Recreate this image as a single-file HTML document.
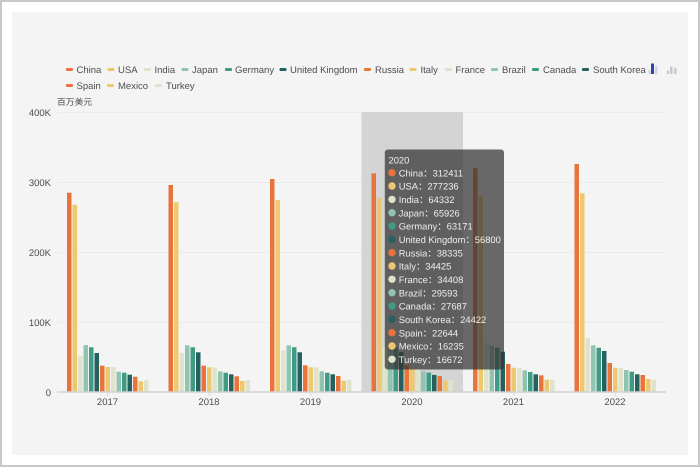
<!DOCTYPE html>
<html><head><meta charset="utf-8">
<style>
html,body{margin:0;padding:0;width:700px;height:467px;overflow:hidden;background:#fff}
svg{display:block;position:absolute;left:0;top:0;filter:blur(.3px)}
text{font-family:"Liberation Sans","Noto Sans CJK SC",sans-serif;font-size:9.5px;fill:#4d4d4d;text-rendering:geometricPrecision}
.a{fill:#e8743b}.b{fill:#edc86f}.c{fill:#dfe3cc}.d{fill:#8fc5b0}.e{fill:#419a84}.f{fill:#25615e}
.t text{fill:#eee;font-size:9.4px}
</style></head><body>
<svg width="700" height="467" viewBox="0 0 700 467" xmlns="http://www.w3.org/2000/svg">
<rect x="1" y="1" width="698" height="465" fill="#fff" stroke="#c8c8c8" stroke-width="2"/>
<rect x="12" y="12" width="676" height="443" fill="#f4f4f4"/>
<!-- legend -->
<g>
<rect class="a" x="66" y="68" width="7" height="3" rx="1"/><text x="76.5" y="73">China</text>
<rect class="b" x="107.5" y="68" width="7" height="3" rx="1"/><text x="118" y="73">USA</text>
<rect class="c" x="144" y="68" width="7" height="3" rx="1"/><text x="154.5" y="73">India</text>
<rect class="d" x="181.5" y="68" width="7" height="3" rx="1"/><text x="192" y="73">Japan</text>
<rect class="e" x="225" y="68" width="7" height="3" rx="1"/><text x="235" y="73">Germany</text>
<rect class="f" x="279.5" y="68" width="7" height="3" rx="1"/><text x="290" y="73">United Kingdom</text>
<rect class="a" x="364" y="68" width="7" height="3" rx="1"/><text x="375" y="73">Russia</text>
<rect class="b" x="409.5" y="68" width="7" height="3" rx="1"/><text x="420.5" y="73">Italy</text>
<rect class="c" x="445" y="68" width="7" height="3" rx="1"/><text x="455.5" y="73">France</text>
<rect class="d" x="491" y="68" width="7" height="3" rx="1"/><text x="502" y="73">Brazil</text>
<rect class="e" x="532" y="68" width="7" height="3" rx="1"/><text x="543" y="73">Canada</text>
<rect class="f" x="582" y="68" width="7" height="3" rx="1"/><text x="593" y="73">South Korea</text>
<rect class="a" x="66" y="84" width="7" height="3" rx="1"/><text x="76.5" y="89">Spain</text>
<rect class="b" x="107" y="84" width="7" height="3" rx="1"/><text x="118" y="89">Mexico</text>
<rect class="c" x="155" y="84" width="7" height="3" rx="1"/><text x="166" y="89">Turkey</text>
</g>
<!-- toolbox icons -->
<g fill="#cdd3ea"><rect x="648.5" y="70" width="2" height="4"/><rect x="655" y="66" width="2.5" height="8"/></g>
<rect x="651" y="63.5" width="3" height="10.5" fill="#2f48a8"/>
<g fill="#c9c9c9"><rect x="667" y="70.5" width="2" height="3.5"/><rect x="670" y="66.5" width="2.5" height="7.5"/><rect x="674" y="68" width="2.5" height="6"/></g>
<!-- axis title -->
<text x="57" y="105" style="font-size:8.8px">百万美元</text>
<!-- grid -->
<g stroke="#ebebeb" stroke-width="1">
<path d="M57 112.5H666M57 182.5H666M57 252.5H666M57 322.5H666"/>
</g>
<!-- y labels -->
<g text-anchor="end">
<text x="51" y="116">400K</text><text x="51" y="186">300K</text><text x="51" y="256">200K</text><text x="51" y="326">100K</text><text x="51" y="396">0</text>
</g>
<!-- axis pointer shadow -->
<rect x="361.5" y="112" width="101.5" height="280" fill="#d4d4d4"/>
<!-- bars -->
<g transform="translate(67 0)">
<path class="a" d="M0 192.7V392h4.5V192.7z"/><path class="b" d="M5.5 204.7V392h4.5V204.7z"/><path class="c" d="M11 356.3V392h4.5V356.3z"/><path class="d" d="M16.5 345V392h4.5V345z"/><path class="e" d="M22 347.3V392h4.5V347.3z"/><path class="f" d="M27.5 353V392h4.5V353z"/><path class="a" d="M33 365.7V392h4.5V365.7z"/><path class="b" d="M38.5 367V392h4.5V367z"/><path class="c" d="M44 367V392h4.5V367z"/><path class="d" d="M49.5 371.7V392h4.5V371.7z"/><path class="e" d="M55 372.7V392h4.5V372.7z"/><path class="f" d="M60.5 374.7V392h4.5V374.7z"/><path class="a" d="M66 376.7V392h4.5V376.7z"/><path class="b" d="M71.5 381.3V392h4.5V381.3z"/><path class="c" d="M77 380.3V392h4.5V380.3z"/>
</g>
<g transform="translate(168.5 0)">
<path class="a" d="M0 185V392h4.5V185z"/><path class="b" d="M5.5 202.3V392h4.5V202.3z"/><path class="c" d="M11 353V392h4.5V353z"/><path class="d" d="M16.5 345.3V392h4.5V345.3z"/><path class="e" d="M22 347.3V392h4.5V347.3z"/><path class="f" d="M27.5 352.3V392h4.5V352.3z"/><path class="a" d="M33 365.7V392h4.5V365.7z"/><path class="b" d="M38.5 367.3V392h4.5V367.3z"/><path class="c" d="M44 367.3V392h4.5V367.3z"/><path class="d" d="M49.5 371.3V392h4.5V371.3z"/><path class="e" d="M55 372.7V392h4.5V372.7z"/><path class="f" d="M60.5 374.3V392h4.5V374.3z"/><path class="a" d="M66 376.3V392h4.5V376.3z"/><path class="b" d="M71.5 381V392h4.5V381z"/><path class="c" d="M77 380V392h4.5V380z"/>
</g>
<g transform="translate(270 0)">
<path class="a" d="M0 179V392h4.5V179z"/><path class="b" d="M5.5 200V392h4.5V200z"/><path class="c" d="M11 350.3V392h4.5V350.3z"/><path class="d" d="M16.5 345.3V392h4.5V345.3z"/><path class="e" d="M22 347.3V392h4.5V347.3z"/><path class="f" d="M27.5 352.3V392h4.5V352.3z"/><path class="a" d="M33 365.3V392h4.5V365.3z"/><path class="b" d="M38.5 367.3V392h4.5V367.3z"/><path class="c" d="M44 367.3V392h4.5V367.3z"/><path class="d" d="M49.5 371.3V392h4.5V371.3z"/><path class="e" d="M55 372.7V392h4.5V372.7z"/><path class="f" d="M60.5 374.3V392h4.5V374.3z"/><path class="a" d="M66 376V392h4.5V376z"/><path class="b" d="M71.5 380.7V392h4.5V380.7z"/><path class="c" d="M77 380V392h4.5V380z"/>
</g>
<g transform="translate(371.5 0)">
<path class="a" d="M0 173.3V392h4.5V173.3z"/><path class="b" d="M5.5 197.9V392h4.5V197.9z"/><path class="c" d="M11 347V392h4.5V347z"/><path class="d" d="M16.5 345.9V392h4.5V345.9z"/><path class="e" d="M22 347.8V392h4.5V347.8z"/><path class="f" d="M27.5 352.2V392h4.5V352.2z"/><path class="a" d="M33 365.2V392h4.5V365.2z"/><path class="b" d="M38.5 367.9V392h4.5V367.9z"/><path class="c" d="M44 367.9V392h4.5V367.9z"/><path class="d" d="M49.5 371.3V392h4.5V371.3z"/><path class="e" d="M55 372.6V392h4.5V372.6z"/><path class="f" d="M60.5 374.9V392h4.5V374.9z"/><path class="a" d="M66 376.1V392h4.5V376.1z"/><path class="b" d="M71.5 380.6V392h4.5V380.6z"/><path class="c" d="M77 380.3V392h4.5V380.3z"/>
</g>
<g transform="translate(473 0)">
<path class="a" d="M0 168.3V392h4.5V168.3z"/><path class="b" d="M5.5 195.7V392h4.5V195.7z"/><path class="c" d="M11 343V392h4.5V343z"/><path class="d" d="M16.5 345.7V392h4.5V345.7z"/><path class="e" d="M22 347.7V392h4.5V347.7z"/><path class="f" d="M27.5 351.7V392h4.5V351.7z"/><path class="a" d="M33 364V392h4.5V364z"/><path class="b" d="M38.5 367.7V392h4.5V367.7z"/><path class="c" d="M44 368V392h4.5V368z"/><path class="d" d="M49.5 370.3V392h4.5V370.3z"/><path class="e" d="M55 372V392h4.5V372z"/><path class="f" d="M60.5 374.3V392h4.5V374.3z"/><path class="a" d="M66 375.3V392h4.5V375.3z"/><path class="b" d="M71.5 379.7V392h4.5V379.7z"/><path class="c" d="M77 379.7V392h4.5V379.7z"/>
</g>
<g transform="translate(574.5 0)">
<path class="a" d="M0 164V392h4.5V164z"/><path class="b" d="M5.5 193.3V392h4.5V193.3z"/><path class="c" d="M11 338V392h4.5V338z"/><path class="d" d="M16.5 345.3V392h4.5V345.3z"/><path class="e" d="M22 347.7V392h4.5V347.7z"/><path class="f" d="M27.5 351V392h4.5V351z"/><path class="a" d="M33 363V392h4.5V363z"/><path class="b" d="M38.5 367.7V392h4.5V367.7z"/><path class="c" d="M44 368V392h4.5V368z"/><path class="d" d="M49.5 370V392h4.5V370z"/><path class="e" d="M55 371.7V392h4.5V371.7z"/><path class="f" d="M60.5 374.3V392h4.5V374.3z"/><path class="a" d="M66 375V392h4.5V375z"/><path class="b" d="M71.5 379V392h4.5V379z"/><path class="c" d="M77 379.7V392h4.5V379.7z"/>
</g>
<!-- x axis -->
<path d="M57 392H666" stroke="#d2d2d2" stroke-width="1.4"/>
<path d="M107.75 392v4M209.25 392v4M310.75 392v4M412.25 392v4M513.75 392v4M615.25 392v4" stroke="#d8d8d8" stroke-width="1"/>
<g text-anchor="middle">
<text x="107.5" y="405">2017</text><text x="209" y="405">2018</text><text x="310.5" y="405">2019</text><text x="412" y="405">2020</text><text x="513.5" y="405">2021</text><text x="615" y="405">2022</text>
</g>
<!-- tooltip -->
<g class="t">
<rect x="384.8" y="149.5" width="119.2" height="220" rx="3" fill="#323232" fill-opacity=".72"/>
<text x="388.5" y="163.5">2020</text>
<circle class="a" cx="392" cy="172.7" r="3.7"/><text x="398.7" y="176.3">China：312411</text>
<circle class="b" cx="392" cy="186" r="3.7"/><text x="398.7" y="189.6">USA：277236</text>
<circle class="c" cx="392" cy="199.4" r="3.7"/><text x="398.7" y="203">India：64332</text>
<circle class="d" cx="392" cy="212.7" r="3.7"/><text x="398.7" y="216.3">Japan：65926</text>
<circle class="e" cx="392" cy="226" r="3.7"/><text x="398.7" y="229.6">Germany：63171</text>
<circle class="f" cx="392" cy="239.3" r="3.7"/><text x="398.7" y="242.9">United Kingdom：56800</text>
<circle class="a" cx="392" cy="252.7" r="3.7"/><text x="398.7" y="256.3">Russia：38335</text>
<circle class="b" cx="392" cy="266" r="3.7"/><text x="398.7" y="269.6">Italy：34425</text>
<circle class="c" cx="392" cy="279.3" r="3.7"/><text x="398.7" y="282.9">France：34408</text>
<circle class="d" cx="392" cy="292.7" r="3.7"/><text x="398.7" y="296.3">Brazil：29593</text>
<circle class="e" cx="392" cy="306" r="3.7"/><text x="398.7" y="309.6">Canada：27687</text>
<circle class="f" cx="392" cy="319.3" r="3.7"/><text x="398.7" y="322.9">South Korea：24422</text>
<circle class="a" cx="392" cy="332.7" r="3.7"/><text x="398.7" y="336.3">Spain：22644</text>
<circle class="b" cx="392" cy="346" r="3.7"/><text x="398.7" y="349.6">Mexico：16235</text>
<circle class="c" cx="392" cy="359.3" r="3.7"/><text x="398.7" y="362.9">Turkey：16672</text>
</g>
</svg>
</body></html>
